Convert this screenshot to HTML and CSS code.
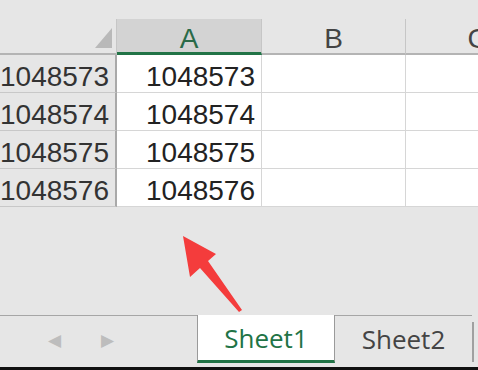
FILE: index.html
```html
<!DOCTYPE html>
<html lang="en">
<head>
    <meta charset="UTF-8">
    <meta name="viewport" content="width=device-width, initial-scale=1.0">
    <title>Sheet1 - last rows</title>
    <link rel="stylesheet" href="styles.css">
</head>
<body>
<div class="window">
    <div class="topband"></div>

    <div class="sheet">
        <div class="corner"><span class="corner-mark"></span></div>
        <div class="colhead selected">A</div>
        <div class="colhead">B</div>
        <div class="colhead">C</div>

        <div class="rowhead">1048573</div>
        <div class="cell num">1048573</div>
        <div class="cell"></div>
        <div class="cell"></div>

        <div class="rowhead">1048574</div>
        <div class="cell num">1048574</div>
        <div class="cell"></div>
        <div class="cell"></div>

        <div class="rowhead">1048575</div>
        <div class="cell num">1048575</div>
        <div class="cell"></div>
        <div class="cell"></div>

        <div class="rowhead">1048576</div>
        <div class="cell num">1048576</div>
        <div class="cell"></div>
        <div class="cell"></div>
    </div>

    <div class="empty"></div>

    <div class="tabbar">
        <div class="tabnav">
            <span class="nav-arrow">&#9664;</span>
            <span class="nav-arrow">&#9654;</span>
        </div>
        <div class="tab active">Sheet1</div>
        <div class="tab">Sheet2</div>
        <div class="tab-sep"></div>
    </div>
    <div class="bottomline"></div>

    <!-- annotation arrow pointing at the empty area -->
    <svg class="pointer" width="478" height="370" viewBox="0 0 478 370">
        <polygon points="183,236 190,277 200,268 239,312 242,310 208,261 216,254" fill="#f43c3c"/>
    </svg>
</div>
</body>
</html>
```

FILE: styles.css
```css
* {
    box-sizing: border-box;
}
body {
    margin: 0;
    background: #e6e6e6;
}
.window {
    position: relative;
    width: 478px;
    height: 370px;
    overflow: hidden;
    display: flex;
    flex-direction: column;
    background: #e6e6e6;
    font-family: "Liberation Sans", Arial, sans-serif;
}
.topband {
    height: 19px;
    flex: none;
}
.sheet {
    flex: none;
    display: grid;
    grid-template-columns: 117px 145px 144px 144px;
    grid-template-rows: 36px 38px 38px 38px 38px;
    font-size: 28px;
    color: #222;
}
.corner {
    position: relative;
    border-right: 1px solid #c6c6c6;
    border-bottom: 2px solid #b4b4b4;
}
.corner-mark {
    position: absolute;
    right: 4px;
    bottom: 5px;
    width: 0;
    height: 0;
    border-left: 17px solid transparent;
    border-bottom: 20px solid #b9b9b9;
}
.colhead {
    display: flex;
    align-items: center;
    justify-content: center;
    padding-top: 6px;
    color: #444;
    border-right: 1px solid #c6c6c6;
    border-bottom: 2px solid #b4b4b4;
}
.colhead.selected {
    background: #d3d3d3;
    color: #2a6a48;
    border-bottom: 3px solid #217346;
}
.rowhead {
    display: flex;
    align-items: center;
    justify-content: flex-end;
    padding: 6px 6px 0 0;
    color: #333;
    border-right: 2px solid #a9a9a9;
    border-bottom: 1px solid #c8c8c8;
    overflow: hidden;
}
.cell {
    display: flex;
    align-items: center;
    justify-content: flex-end;
    padding: 6px 6px 0 0;
    background: #fff;
    border-right: 1px solid #d6d6d6;
    border-bottom: 1px solid #d6d6d6;
}
.empty {
    flex: 1;
}
.tabbar {
    flex: none;
    height: 52px;
    display: flex;
    font-family: "Open Sans", "Segoe UI", sans-serif;
    font-size: 26px;
}
.tabnav {
    width: 197px;
    display: flex;
    align-items: center;
    gap: 40px;
    padding: 0 0 4px 48px;
    border-top: 1px solid #a6a6a6;
}
.nav-arrow {
    color: #bdbdbd;
    font-size: 17px;
    font-family: "DejaVu Sans", sans-serif;
}
.tab {
    width: 137px;
    display: flex;
    align-items: center;
    justify-content: center;
    padding-bottom: 5px;
    color: #444;
    border-top: 1px solid #a6a6a6;
}
.tab.active {
    width: 138px;
    background: #fff;
    color: #217346;
    border-top: none;
    border-left: 1px solid #9a9a9a;
    border-right: 1px solid #9a9a9a;
    border-bottom: 3px solid #217346;
    margin-bottom: 4px;
    padding-bottom: 0;
}
.tab-sep {
    flex: 1;
    border-left: 2px solid #a0a0a0;
    margin: 7px 0 5px;
}
.bottomline {
    flex: none;
    height: 3px;
    background: #111;
}
.pointer {
    position: absolute;
    left: 0;
    top: 0;
}
```
